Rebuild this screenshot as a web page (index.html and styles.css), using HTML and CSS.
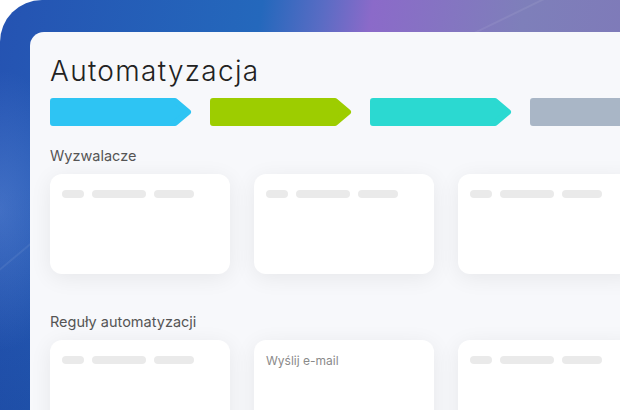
FILE: index.html
```html
<!DOCTYPE html>
<html lang="pl">
<head>
<meta charset="UTF-8" />
<meta name="viewport" content="width=device-width, initial-scale=1" />
<title>Automatyzacja</title>
<link rel="stylesheet" href="styles.css">
</head>
<body>
  <div class="stage">
    <div class="shine"></div>
    <div class="shine top"></div>
    <div class="panel">
      <h1 class="title">Automatyzacja</h1>

      <div class="steps">
        <svg class="step" viewBox="0 0 142 28"><polygon points="3,3 125,3 138,14 125,25 3,25" fill="#2ec4f3" stroke="#2ec4f3" stroke-width="6" stroke-linejoin="round"/></svg>
        <svg class="step" viewBox="0 0 142 28"><polygon points="3,3 125,3 138,14 125,25 3,25" fill="#9dcd00" stroke="#9dcd00" stroke-width="6" stroke-linejoin="round"/></svg>
        <svg class="step" viewBox="0 0 142 28"><polygon points="3,3 125,3 138,14 125,25 3,25" fill="#2bd9d1" stroke="#2bd9d1" stroke-width="6" stroke-linejoin="round"/></svg>
        <svg class="step" viewBox="0 0 142 28"><polygon points="3,3 125,3 138,14 125,25 3,25" fill="#a9b6c6" stroke="#a9b6c6" stroke-width="6" stroke-linejoin="round"/></svg>
      </div>

      <h2 class="label">Wyzwalacze</h2>
      <div class="cards">
        <div class="card">
          <div class="pills"><span class="pill s"></span><span class="pill l"></span><span class="pill m"></span></div>
        </div>
        <div class="card">
          <div class="pills"><span class="pill s"></span><span class="pill l"></span><span class="pill m"></span></div>
        </div>
        <div class="card">
          <div class="pills"><span class="pill s"></span><span class="pill l"></span><span class="pill m"></span></div>
        </div>
      </div>

      <h2 class="label">Reguły automatyzacji</h2>
      <div class="cards">
        <div class="card">
          <div class="pills"><span class="pill s"></span><span class="pill l"></span><span class="pill m"></span></div>
        </div>
        <div class="card">
          <p class="card-text">Wyślij e-mail</p>
        </div>
        <div class="card">
          <div class="pills"><span class="pill s"></span><span class="pill l"></span><span class="pill m"></span></div>
        </div>
      </div>
    </div>
  </div>
</body>
</html>
```

FILE: styles.css
```css
html, body {
  margin: 0;
  background: #fff;
}
body {
  width: 620px;
  height: 410px;
  overflow: hidden;
  font-family: Inter, "Noto Sans", sans-serif;
}
.stage {
  position: relative;
  height: 410px;
  padding: 32px 0 0 30px;
  box-sizing: border-box;
  border-top-left-radius: 42px;
  overflow: hidden;
  background:
    radial-gradient(ellipse 80px 140px at 0 210px, rgba(120,160,230,0.35), rgba(120,160,230,0) 100%),
    linear-gradient(180deg, rgba(255,255,255,0) 45%, rgba(10,40,120,0.22) 100%),
    linear-gradient(100deg, #2553b2 0%, #2468bc 38%, #5a6cc4 47%, #8b6ac9 54%, #7e7fba 76%, #7f78b8 100%);
}
.shine {
  position: absolute;
  left: -20px;
  top: 285px;
  width: 90px;
  height: 2px;
  background: rgba(255,255,255,0.07);
  box-shadow: 0 -24px 36px rgba(255,255,255,0.04);
  transform: rotate(-40deg);
  transform-origin: left top;
}
.shine.top {
  left: 470px;
  top: 34px;
  width: 200px;
  transform: rotate(-26deg);
}
.panel {
  position: relative;
  width: 700px;
  height: 400px;
  padding: 20px 0 0 20px;
  box-sizing: border-box;
  background: #f7f8fb;
  border-top-left-radius: 14px;
}
.title {
  margin: 0;
  font-family: Inter, sans-serif;
  font-weight: 300;
  font-size: 28px;
  line-height: 38px;
  letter-spacing: 1.3px;
  color: #222;
}
.steps {
  display: flex;
  gap: 18px;
  margin-top: 8px;
}
.step {
  display: block;
  width: 142px;
  height: 28px;
  flex: none;
}
.label {
  margin: 20px 0 0;
  font-size: 14.5px;
  line-height: 20px;
  font-weight: 400;
  color: #555;
}
.cards {
  display: flex;
  gap: 24px;
  margin-top: 8px;
}
.card {
  flex: none;
  width: 180px;
  height: 100px;
  padding: 16px 12px 0;
  box-sizing: border-box;
  background: #fff;
  border-radius: 12px;
  box-shadow: 0 4px 22px rgba(0, 0, 0, 0.07);
}
.cards + .label {
  margin-top: 38px;
}
.pills {
  display: flex;
  gap: 8px;
}
.pill {
  height: 8px;
  border-radius: 4px;
  background: #eaeaea;
}
.pill.s { width: 22px; }
.pill.l { width: 54px; }
.pill.m { width: 40px; }
.card-text {
  margin: -3px 0 0;
  font-size: 12px;
  line-height: 16px;
  color: #8a8a8a;
}
```
